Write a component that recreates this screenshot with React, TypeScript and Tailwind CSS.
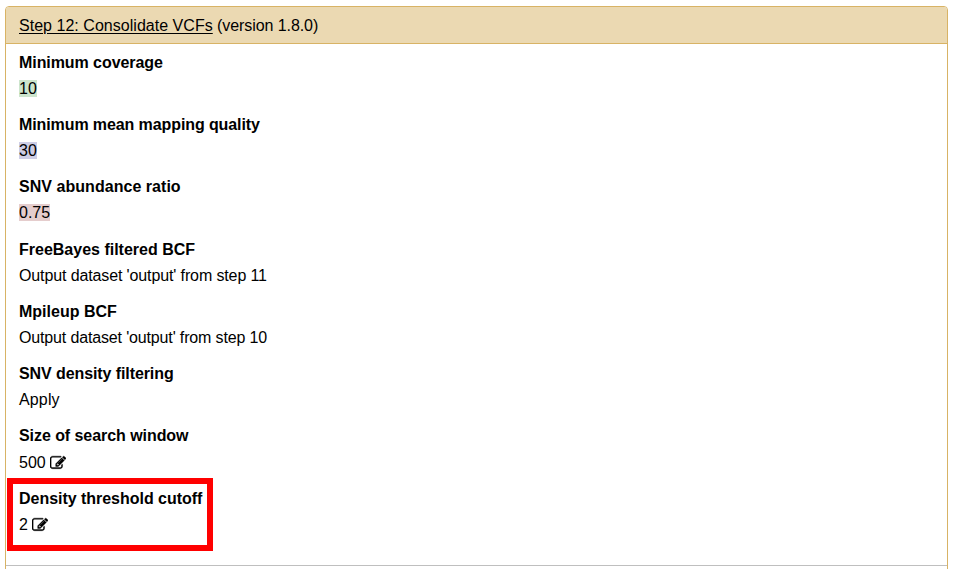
import React from "react";

const EditIcon = () => (
  <svg viewBox="0 0 1792 1792" className="ml-1 inline-block h-4 w-4 align-[-3px]" fill="currentColor" stroke="currentColor" strokeWidth="44" aria-hidden="true">
    <path d="M888 1184l116-116-152-152-116 116v56h96v96h56zm440-720q-16-16-33 1l-350 350q-17 17-1 33t33-1l350-350q17-17 1-33zm80 594v190q0 119-84.500 203.500t-203.500 84.500h-832q-119 0-203.500-84.500t-84.500-203.500v-832q0-119 84.500-203.500t203.500-84.500h832q63 0 117 25 15 7 18 23 3 17-9 29l-49 49q-14 14-32 8-23-6-45-6h-832q-66 0-113 47t-47 113v832q0 66 47 113t113 47h832q66 0 113-47t47-113v-126q0-13 9-22l64-64q15-15 35-7t20 29zm-96-738l288 288-672 672h-288v-288zm444 132l-92 92-288-288 92-92q28-28 68-28t68 28l152 152q28 28 28 68t-28 68z" />
  </svg>
);

type Field = {
  label: string;
  value: string;
  labelClass?: string;
  valueClass?: string;
  editable?: boolean;
};

const fields: Field[] = [
  { label: "Minimum coverage", labelClass: "tracking-[-0.07px]", value: "10", valueClass: "bg-[#cde5cd]" },
  { label: "Minimum mean mapping quality", labelClass: "tracking-[-0.1px]", value: "30", valueClass: "bg-[#cdcde5]" },
  { label: "SNV abundance ratio", labelClass: "tracking-[0.04px]", value: "0.75", valueClass: "bg-[#e5cdcd]" },
  { label: "FreeBayes filtered BCF", value: "Output dataset 'output' from step 11", valueClass: "tracking-[-0.12px]" },
  { label: "Mpileup BCF", value: "Output dataset 'output' from step 10", valueClass: "tracking-[-0.15px]" },
  { label: "SNV density filtering", labelClass: "tracking-[-0.09px]", value: "Apply", valueClass: "tracking-[0.15px]" },
  { label: "Size of search window", labelClass: "tracking-[-0.06px]", value: "500", editable: true },
  { label: "Density threshold cutoff", labelClass: "tracking-[-0.03px]", value: "2", editable: true },
];

export default function App() {
  return (
    <div className="relative h-[569px] overflow-hidden bg-white pl-[5px] pr-[5px] pt-[6px] font-['Liberation_Sans',Arial,sans-serif] text-[16px] leading-6 text-black">
      <section className="h-[580px] rounded-t-[4px] border border-[#d8b365]">
        <header className="h-[37px] rounded-t-[3px] border-b border-[#d8b365] bg-[#ebd9b2] px-[13px] pt-[7px]">
          <span className="tracking-[0.03px] underline decoration-1 underline-offset-2">Step 12: Consolidate VCFs</span>
          <span className="tracking-[-0.08px]"> (version 1.8.0)</span>
        </header>
        <div className="h-[522px] border-b border-[#bfbfbf] px-[13px] pt-[6.85px]">
          {fields.map((f) => (
            <div key={f.label} className="h-[62.27px]">
              <div className={f.editable ? "h-[26.25px] font-bold" : "h-[26.06px] font-bold"}>
                <span className={f.labelClass}>{f.label}</span>
              </div>
              <div>
                <span className={f.valueClass}>{f.value}</span>
                {f.editable && <EditIcon />}
              </div>
            </div>
          ))}
        </div>
      </section>
      <div className="absolute left-[7px] top-[478px] h-[73px] w-[206px] border-[6px] border-[#ff0000]" />
    </div>
  );
}
